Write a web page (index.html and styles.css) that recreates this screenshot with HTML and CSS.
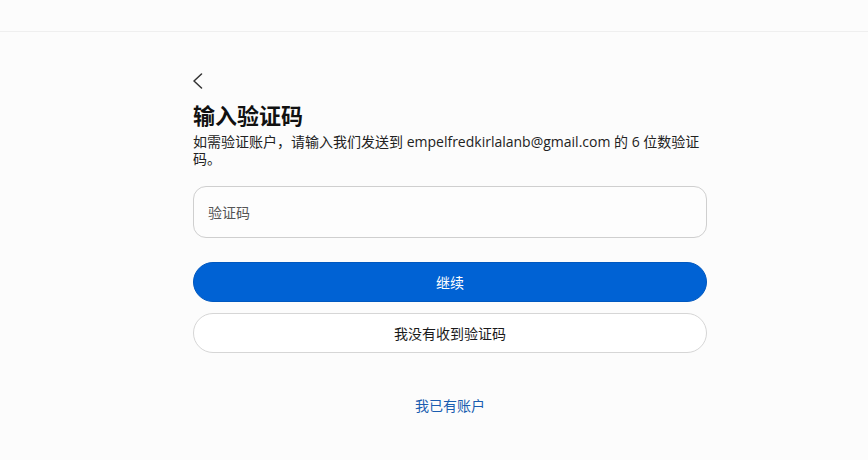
FILE: index.html
```html
<!DOCTYPE html>
<html lang="zh">
<head>
<meta charset="utf-8">
<link rel="stylesheet" href="styles.css">
</head>
<body>
<header class="topbar"></header>
<main class="page">
  <div class="col">
    <button class="back" aria-label="返回">
      <svg width="12" height="16" viewBox="0 0 12 16"><path d="M9.5 1 L2 8 L9.5 15" fill="none" stroke="#333" stroke-width="1.5" stroke-linecap="round" stroke-linejoin="round"/></svg>
    </button>
    <h1 class="title">输入验证码</h1>
    <p class="desc">如需验证账户，请输入我们发送到 empelfredkirlalanb@gmail.com 的 6 位数验证码。</p>
    <div class="field"><span class="placeholder">验证码</span></div>
    <button class="btn primary">继续</button>
    <button class="btn secondary">我没有收到验证码</button>
    <a class="link" href="#">我已有账户</a>
  </div>
</main>
</body>
</html>
```
FILE: styles.css
```css
* { box-sizing: border-box; }
html, body { margin: 0; padding: 0; }
body {
  background: #fcfcfc;
  font-family: "Open Sans", "Noto Sans CJK SC", sans-serif;
  color: #1a1a1a;
  width: 868px;
  height: 460px;
  overflow: hidden;
}
.topbar {
  height: 32px;
  border-bottom: 1px solid #efefef;
  background: #fcfcfc;
}
.page {
  display: flex;
  padding-left: 193px;
}
.col {
  width: 514px;
  display: flex;
  flex-direction: column;
  padding-top: 41px;
}
.back {
  background: none;
  border: 0;
  padding: 0;
  margin-left: -1px;
  width: 12px;
  height: 16px;
  display: block;
  cursor: pointer;
}
.title {
  margin: 11px 0 0;
  font-size: 22px;
  line-height: 28px;
  font-weight: 700;
  font-family: "Noto Sans CJK SC", sans-serif;
  color: #111;
}
.desc {
  margin: 5px 0 0;
  font-size: 14px;
  line-height: 17px;
  color: #222;
}
.field {
  margin-top: 19px;
  height: 52px;
  border: 1px solid #cfcfcf;
  border-radius: 13px;
  background: #fdfdfd;
  display: flex;
  align-items: center;
  padding-left: 14px;
}
.placeholder {
  font-size: 14px;
  color: #555;
  font-family: "Noto Sans CJK SC", sans-serif;
}
.btn {
  height: 40px;
  border-radius: 20px;
  font-size: 14px;
  font-family: "Noto Sans CJK SC", sans-serif;
  width: 100%;
  cursor: pointer;
  padding: 0;
}
.primary {
  margin-top: 24px;
  background: #0062d4;
  border: 1px solid #0058c0;
  color: #fff;
}
.secondary {
  margin-top: 11px;
  background: #fff;
  border: 1px solid #d6d6d6;
  color: #1a1a1a;
}
.link {
  align-self: center;
  margin-top: 42px;
  font-size: 14px;
  color: #1a5db0;
  text-decoration: none;
  font-family: "Noto Sans CJK SC", sans-serif;
}
```
